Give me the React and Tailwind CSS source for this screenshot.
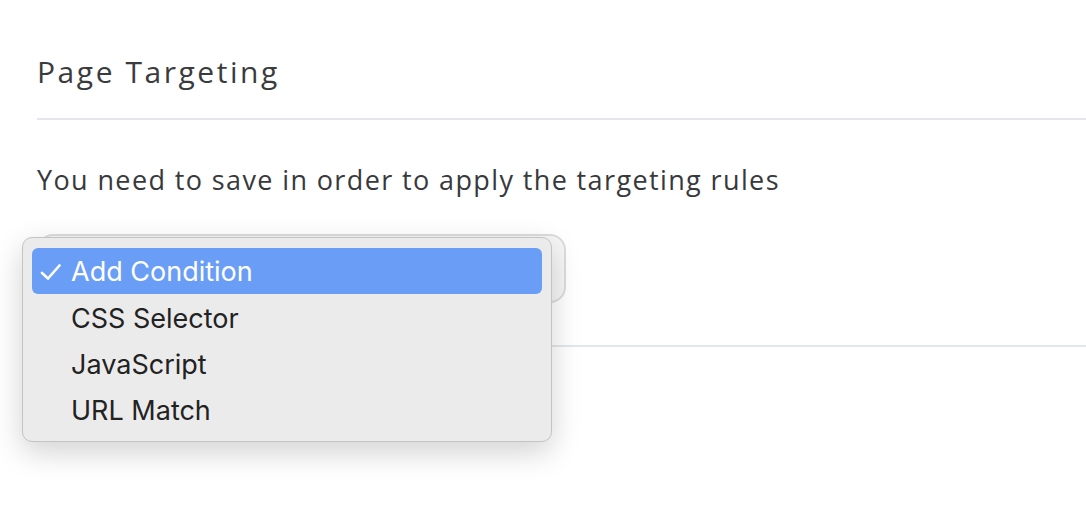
import React from "react";

export default function App() {
  const items = ["Add Condition", "CSS Selector", "JavaScript", "URL Match"];
  return (
    <div className="relative w-[1086px] h-[516px] bg-white overflow-hidden">
      <div className="pl-[37px] pt-[52px]" style={{ fontFamily: '"Open Sans", sans-serif' }}>
        <h2 className="text-[30px] leading-[40px] tracking-[2.55px] text-[#3a3b3d] font-normal">Page Targeting</h2>
        <div className="mt-[26px] border-t-2 border-[#e3e6ea]" />
        <p className="mt-[42px] text-[27px] leading-[36px] tracking-[1.38px] text-[#38393c]">
          You need to save in order to apply the targeting rules
        </p>
        <div className="mt-[36px] w-[529px] h-[69px] rounded-[16px] border-2 border-[#dcdcdc] bg-[#f6f6f6]" />
        <div className="mt-[42px] border-t-2 border-[#e3e6ea]" />
      </div>

      <div
        className="absolute left-[22px] top-[237px] w-[530px] h-[205px] rounded-[10px] bg-[#ebebeb] border border-[#c4c4c4] shadow-[0_10px_30px_rgba(0,0,0,0.18)] px-[9px] pt-[10px]"
        style={{ fontFamily: 'Inter, "Liberation Sans", sans-serif' }}
      >
        {items.map((it, i) => (
          <div
            key={it}
            className={
              i === 0
                ? "relative h-[46px] rounded-[6px] bg-[#6a9ef6] text-white flex items-center pl-[39px] pt-[2px] text-[27px]"
                : "relative h-[46px] flex items-center pl-[39px] pt-[4px] text-[27px] text-[#222222]"
            }
          >
            {i === 0 && (
              <svg className="absolute left-[8px] top-[16px]" width="22" height="16" viewBox="0 0 22 16">
                <path d="M2 9 L8 14.5 L19.5 1.5" fill="none" stroke="white" strokeWidth="2.6" strokeLinecap="round" strokeLinejoin="round" />
              </svg>
            )}
            <span>{it}</span>
          </div>
        ))}
      </div>
    </div>
  );
}
